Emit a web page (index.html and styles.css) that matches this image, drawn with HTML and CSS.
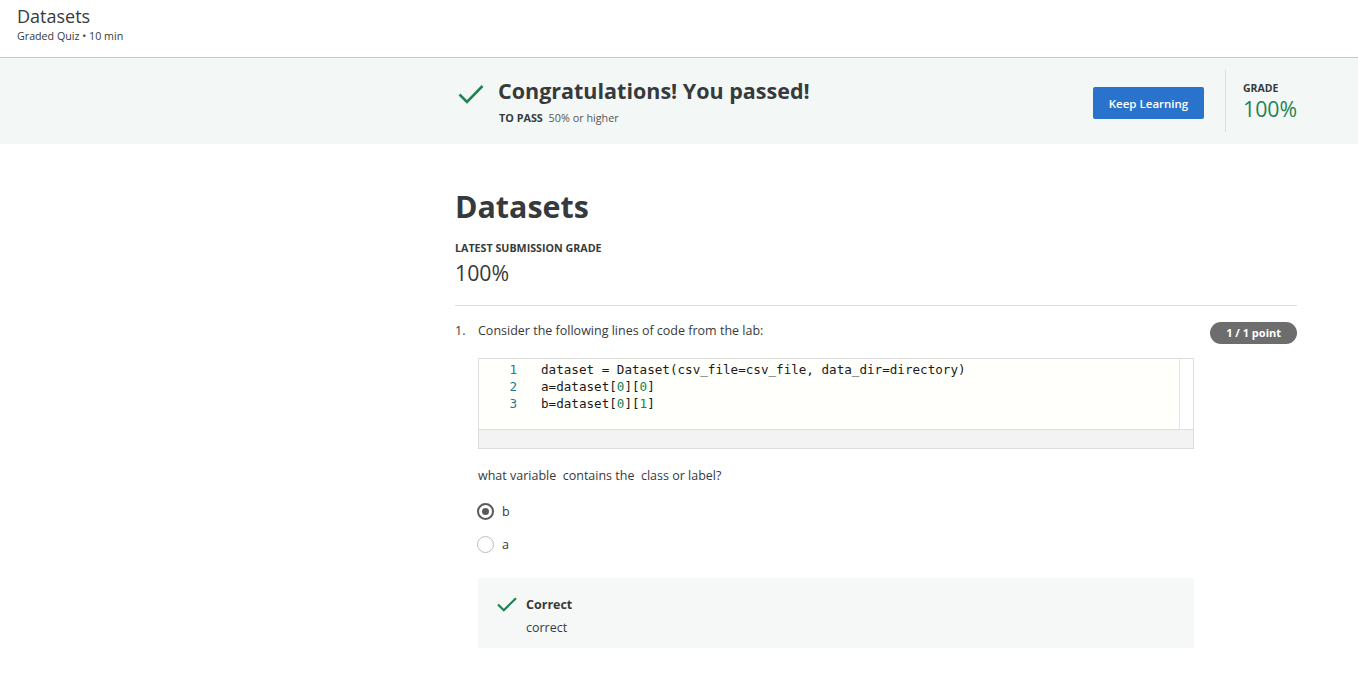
FILE: index.html
```html
<!DOCTYPE html>
<html>
<head>
<meta charset="utf-8">
<link rel="stylesheet" href="styles.css">
</head>
<body>
<header class="topbar">
  <div class="topbar-title">Datasets</div>
  <div class="topbar-sub">Graded Quiz • 10 min</div>
</header>
<section class="banner">
  <div class="banner-inner">
    <svg class="banner-check" width="26" height="20" viewBox="0 0 26 20"><path d="M1.5 10.5 L9 18 L24.5 2" fill="none" stroke="#1f8354" stroke-width="2.6"/></svg>
    <div class="banner-text">
      <div class="banner-title">Congratulations! You passed!</div>
      <div class="banner-pass"><b>TO PASS</b> 50% or higher</div>
    </div>
    <button class="btn-keep">Keep Learning</button>
    <div class="banner-grade">
      <div class="grade-label">GRADE</div>
      <div class="grade-value">100%</div>
    </div>
  </div>
</section>
<main class="content">
  <h1 class="page-title">Datasets</h1>
  <div class="latest-label">LATEST SUBMISSION GRADE</div>
  <div class="latest-value">100%</div>
  <hr class="sep">
  <div class="question">
    <div class="q-head">
      <span class="q-num">1.</span>
      <span class="q-text">Consider the following lines of code from the lab:</span>
      <span class="badge">1 / 1 point</span>
    </div>
    <div class="q-body">
      <div class="code">
        <div class="code-main">
          <div class="code-lines">
            <div class="ln"><span class="num">1</span><span>dataset = Dataset(csv_file=csv_file, data_dir=directory)</span></div>
            <div class="ln"><span class="num">2</span><span>a=dataset[<span class="d">0</span>][<span class="d">0</span>]</span></div>
            <div class="ln"><span class="num">3</span><span>b=dataset[<span class="d">0</span>][<span class="d">1</span>]</span></div>
          </div>
          <div class="vscroll"></div>
        </div>
        <div class="hscroll"></div>
      </div>
      <p class="prompt">what variable&nbsp; contains the&nbsp; class or label?</p>
      <div class="opt first"><span class="radio checked"></span><span>b</span></div>
      <div class="opt"><span class="radio"></span><span>a</span></div>
      <div class="feedback">
        <svg class="fb-check" width="20" height="15" viewBox="0 0 20 15"><path d="M1 7.5 L6.8 13.2 L19 1.2" fill="none" stroke="#1f8354" stroke-width="2.2"/></svg>
        <div>
          <div class="fb-title">Correct</div>
          <div class="fb-text">correct</div>
        </div>
      </div>
    </div>
  </div>
</main>
</body>
</html>
```
FILE: styles.css
```css
* { box-sizing: border-box; }
html, body { margin: 0; padding: 0; background: #fff; }
body { font-family: "Open Sans", "Noto Sans", sans-serif; color: #1f1f1f; }

.topbar {
  height: 58px;
  padding: 4px 17px 0;
  border-bottom: 1px solid #c6c6c6;
}
.topbar-title { font-size: 18px; line-height: 24px; color: #373a3c; }
.topbar-sub { font-size: 10.7px; line-height: 15px; color: #373a3c; margin-top: 1px; }

.banner { background: #f3f8f7; height: 86px; }
.banner-inner {
  width: 842px; margin-left: 455px;
  display: flex; align-items: flex-start; height: 100%;
}
.banner-check { margin-left: 3px; margin-top: 26px; flex: none; }
.banner-text { margin-left: 14px; flex: 1; padding-top: 18px; }
.banner-title { font-size: 21.5px; font-weight: 700; color: #373a3c; line-height: 30px; }
.banner-pass { font-size: 10.8px; color: #555; margin-top: 4px; margin-left: 1px; }
.banner-pass b { color: #373a3c; margin-right: 3px; }
.btn-keep {
  width: 111px; height: 32px;
  background: #2a73cc; color: #fff; border: 0; border-radius: 2px;
  font-family: inherit; font-size: 11.5px; font-weight: 600;
  margin-top: 29px; padding: 0;
}
.banner-grade {
  margin-left: 21px; height: 62px; margin-top: 12px;
  border-left: 1px solid #d9dcdb;
  padding-left: 17px; padding-top: 11px;
  width: 72px; white-space: nowrap;
}
.grade-label { font-size: 10.5px; font-weight: 700; color: #373a3c; line-height: 15px; }
.grade-value { font-size: 21.3px; color: #1f8354; line-height: 26px; }

.content { width: 842px; margin-left: 455px; padding-top: 43px; }
.page-title { margin: 0; font-size: 30.4px; line-height: 40px; font-weight: 700; color: #373a3c; }
.latest-label { font-size: 10.7px; font-weight: 700; color: #373a3c; margin-top: 13px; line-height: 16px; }
.latest-value { font-size: 21.3px; color: #373a3c; line-height: 30px; margin-top: 2px; }
.sep { border: 0; border-top: 1px solid #dcdcdc; margin: 17px 0 0; }

.question { padding-top: 16px; }
.q-head { display: flex; align-items: flex-start; font-size: 12.5px; color: #373a3c; height: 22px; line-height: 18px; }
.q-num { width: 23px; }
.q-text { flex: 1; }
.badge {
  background: #6d6d6d; color: #fff; font-size: 11px; font-weight: 700;
  height: 22px; line-height: 22px; padding: 0 16px; border-radius: 11px;
}
.q-body { margin-left: 23px; width: 716px; }

.code {
  margin-top: 14px;
  border: 1px solid #ddd;
  height: 91px;
  display: flex; flex-direction: column;
}
.code-main { flex: 1; display: flex; background: #fffffc; }
.code-lines {
  flex: 1; padding-top: 2px;
  font-family: "DejaVu Sans Mono", monospace; font-size: 12.6px; line-height: 17px; color: #1a1a1a;
}
.ln { display: flex; }
.ln .num { width: 62px; padding-right: 24px; text-align: right; color: #237893; }
.d { color: #098658; }
.vscroll { width: 14px; border-left: 1px solid #e6e6e6; background: #fff; }
.hscroll { height: 19px; background: #f3f3f3; border-top: 1px solid #ddd; }

.prompt { margin: 18px 0 0; font-size: 12.5px; color: #373a3c; line-height: 18px; }
.opt { display: flex; align-items: center; font-size: 12.5px; color: #373a3c; height: 18px; margin-top: 15px; }
.opt.first { margin-top: 17px; }
.radio {
  width: 17px; height: 17px; border-radius: 50%;
  border: 1px solid #bdbdbd; margin-right: 8px; margin-left: -1px;
  display: inline-flex; align-items: center; justify-content: center;
}
.radio.checked { border: 2px solid #5a5a5a; }
.radio.checked::after { content: ""; width: 7px; height: 7px; border-radius: 50%; background: #5a5a5a; }

.feedback {
  margin-top: 25px; background: #f5f8f7; height: 70px;
  display: flex; padding: 20px 19px 0;
}
.fb-check { flex: none; margin-right: 9px; margin-top: -1px; }
.fb-title { font-size: 12.5px; font-weight: 700; color: #373a3c; line-height: 16px; margin-top: -1px; }
.fb-text { font-size: 12.5px; color: #373a3c; line-height: 16px; margin-top: 7px; }
```
